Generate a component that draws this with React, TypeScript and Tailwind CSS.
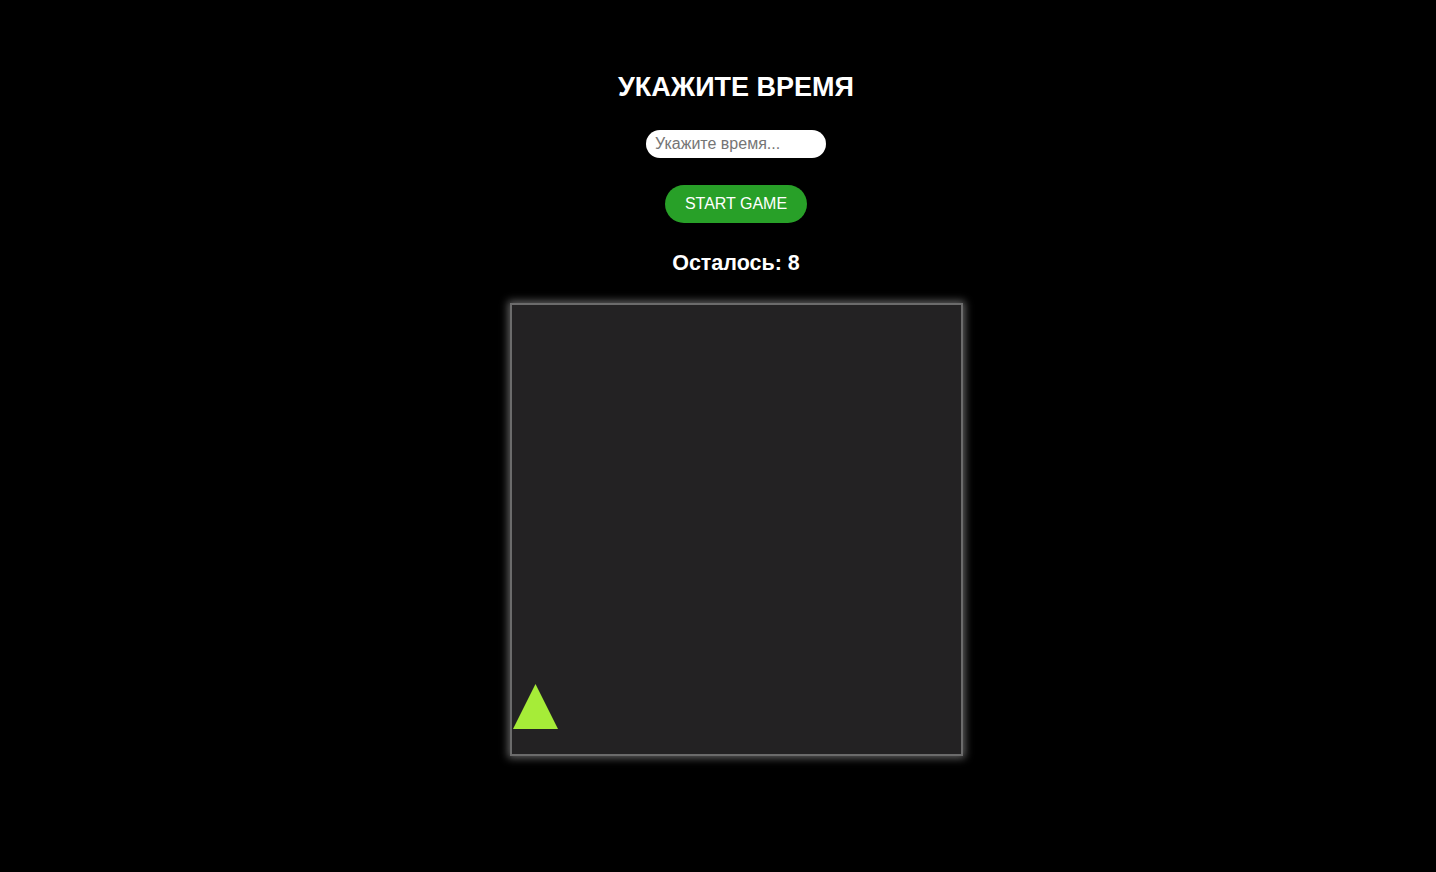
import React from "react";

const App = () => {
  const remaining = 8;
  return (
    <div className="min-h-screen w-full bg-black text-white font-['Liberation_Sans',Arial,sans-serif] flex flex-col items-center pl-[36px]">
      <h1 className="mt-[71px] text-[27px] font-bold leading-8">УКАЖИТЕ ВРЕМЯ</h1>
      <input
        type="text"
        placeholder="Укажите время..."
        className="mt-[27px] w-[180px] h-[28px] rounded-full bg-white px-[9px] text-[16px] text-black placeholder:text-[#757575] outline-none"
      />
      <button className="mt-[27px] w-[142px] h-[38px] rounded-full bg-[#28a028] text-white text-[16px]">
        START GAME
      </button>
      <div className="mt-[28px] text-[21.5px] font-bold leading-6">Осталось: {remaining}</div>
      {/* Game field */}
      <div className="mt-[28px] w-[453px] h-[453px] border-2 border-[#6b6b6b] bg-[#232223] shadow-[0_0_8px_2px_rgba(220,220,220,0.45)] relative">
        <svg
          className="absolute left-[1px] bottom-[25px]"
          width="45"
          height="45"
          viewBox="0 0 45 45"
        >
          <polygon points="22.5,0 45,45 0,45" fill="#a6ec38" />
        </svg>
      </div>
    </div>
  );
};

export default App;
